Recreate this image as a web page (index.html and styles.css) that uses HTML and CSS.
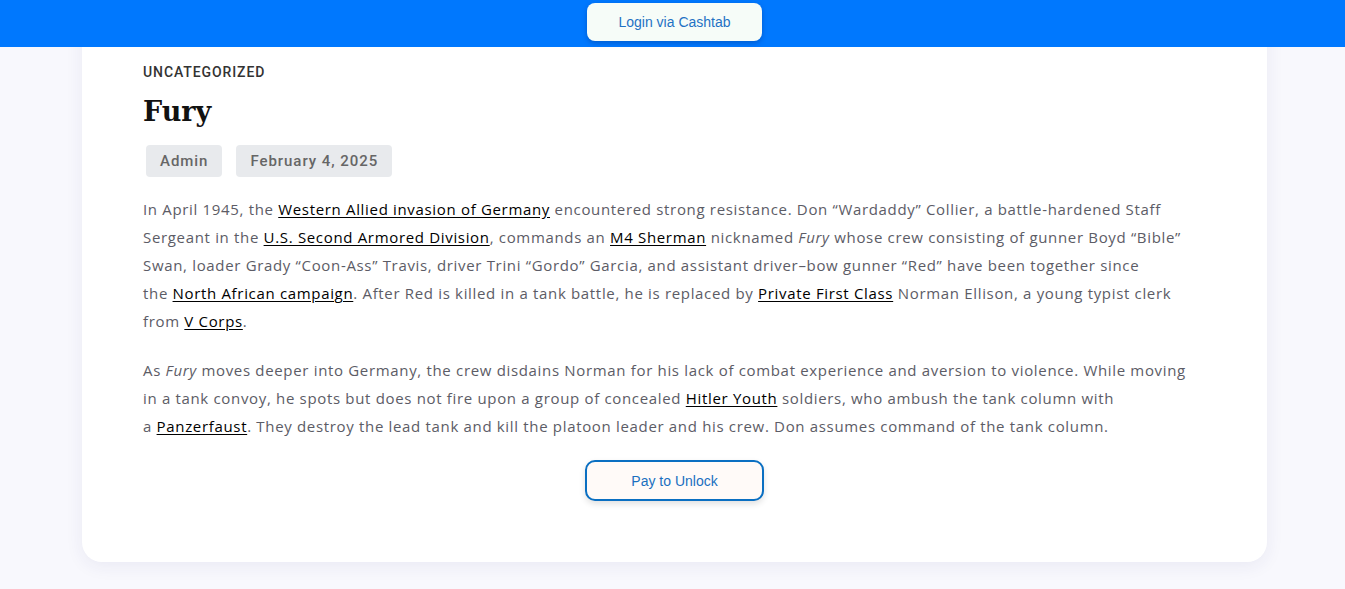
FILE: index.html
```html
<!DOCTYPE html>
<html lang="en">
<head>
<meta charset="utf-8">
<title>Fury</title>
<link rel="stylesheet" href="styles.css">
</head>
<body>
<header class="topbar">
  <button class="login-btn">Login via Cashtab</button>
</header>
<main class="page">
  <article class="card">
    <div class="category">UNCATEGORIZED</div>
    <h1 class="title">Fury</h1>
    <div class="meta">
      <span class="tag">Admin</span>
      <span class="tag">February 4, 2025</span>
    </div>
    <p class="para">In April 1945, the <a href="#">Western Allied invasion of Germany</a> encountered strong resistance. Don “Wardaddy” Collier, a battle-hardened Staff<br>Sergeant in the <a href="#">U.S. Second Armored Division</a>, commands an <a href="#">M4 Sherman</a> nicknamed <em>Fury</em> whose crew consisting of gunner Boyd “Bible”<br>Swan, loader Grady “Coon-Ass” Travis, driver Trini “Gordo” Garcia, and assistant driver–bow gunner “Red” have been together since<br>the <a href="#">North African campaign</a>. After Red is killed in a tank battle, he is replaced by <a href="#">Private First Class</a> Norman Ellison, a young typist clerk<br>from <a href="#">V Corps</a>.</p>
    <p class="para">As <em>Fury</em> moves deeper into Germany, the crew disdains Norman for his lack of combat experience and aversion to violence. While moving<br>in a tank convoy, he spots but does not fire upon a group of concealed <a href="#">Hitler Youth</a> soldiers, who ambush the tank column with<br>a <a href="#">Panzerfaust</a>. They destroy the lead tank and kill the platoon leader and his crew. Don assumes command of the tank column.</p>
    <div class="actions">
      <button class="unlock-btn">Pay to Unlock</button>
    </div>
  </article>
</main>
</body>
</html>
```
FILE: styles.css
```css
* { box-sizing: border-box; }
html, body { margin: 0; padding: 0; }
body {
  background: #f8f8fd;
  font-family: "Open Sans", "Noto Sans", sans-serif;
  height: 589px;
  overflow: hidden;
}
.topbar {
  position: fixed;
  top: 0; left: 0; right: 0;
  height: 47px;
  background: #0078fe;
  display: flex;
  justify-content: center;
  align-items: flex-start;
  padding: 3px 0 0 4px;
  z-index: 10;
}
.login-btn {
  width: 175px;
  height: 38px;
  border: none;
  border-radius: 8px;
  background: #f6fcf8;
  color: #1f72c4;
  font-family: "Liberation Sans", Arial, sans-serif;
  font-size: 14px;
  box-shadow: 0 2px 5px rgba(0, 40, 120, 0.35);
}
.page {
  padding: 0 78px 27px 82px;
}
.card {
  margin-top: 0;
  width: 1185px;
  background: #fff;
  border-radius: 0 0 20px 20px;
  box-shadow: 0 4px 18px rgba(40, 40, 120, 0.07);
  padding: 62px 61px 61px 61px;
}
.category {
  font-family: "Roboto", "Open Sans", sans-serif;
  font-size: 14px;
  font-weight: 500;
  color: #333;
  letter-spacing: 0.9px;
  line-height: 20px;
}
.title {
  font-family: "DejaVu Serif", "Liberation Serif", serif;
  font-size: 27px;
  font-weight: bold;
  color: #111;
  margin: 10px 0 0 0;
  line-height: 40px;
}
.meta {
  display: flex;
  gap: 14px;
  margin: 13px 0 0 3px;
}
.tag {
  background: #e8eaed;
  border-radius: 4px;
  height: 32px;
  padding: 0 14px;
  display: flex;
  align-items: center;
  font-family: "Roboto", "Open Sans", sans-serif;
  font-size: 15px;
  font-weight: 500;
  color: #666;
  letter-spacing: 0.95px;
}
.para {
  font-size: 15px;
  line-height: 28px;
  color: #5c5c66;
  letter-spacing: 0.67px;
  margin: 18px 0 0 0;
  white-space: nowrap;
}
.para + .para {
  margin-top: 21px;
}
.para a {
  color: #000;
  text-decoration: underline;
  text-underline-offset: 2px;
}
.para em { font-style: italic; }
.actions {
  display: flex;
  justify-content: center;
  margin-top: 20px;
}
.unlock-btn {
  width: 179px;
  height: 41px;
  border: 2px solid #0a6fc2;
  border-radius: 10px;
  background: #fffaf8;
  color: #1a6fc0;
  font-family: "Liberation Sans", Arial, sans-serif;
  font-size: 14px;
  box-shadow: 0 3px 6px rgba(0, 0, 0, 0.12);
}
```
